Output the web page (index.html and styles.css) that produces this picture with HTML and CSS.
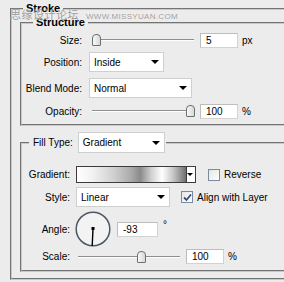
FILE: index.html
```html
<!DOCTYPE html>
<html lang="en">
<head>
    <meta charset="UTF-8">
    <title>Stroke</title>
    <link rel="stylesheet" href="styles.css">
</head>
<body>
    <fieldset class="group outer">
        <legend class="title">Stroke</legend>

        <fieldset class="group structure">
            <legend class="title sub">Structure</legend>

            <div class="row size">
                <label class="lbl">Size:</label>
                <div class="slider"><span class="thumb" style="left:0px"></span></div>
                <div class="num">5</div>
                <span class="unit">px</span>
            </div>
            <div class="row position">
                <label class="lbl">Position:</label>
                <div class="select w-position">Inside<span class="arrow"></span></div>
            </div>
            <div class="row blend">
                <label class="lbl">Blend Mode:</label>
                <div class="select w-blend">Normal<span class="arrow"></span></div>
            </div>
            <div class="row opacity">
                <label class="lbl">Opacity:</label>
                <div class="slider"><span class="thumb" style="left:94px"></span></div>
                <div class="num">100</div>
                <span class="unit">%</span>
            </div>
        </fieldset>

        <fieldset class="group fill">
            <legend class="fill-legend">
                <span class="legend-row">
                    <label class="fill-lbl">Fill Type:</label>
                    <span class="select w-fill">Gradient<span class="arrow"></span></span>
                </span>
            </legend>

            <div class="row gradient">
                <label class="lbl">Gradient:</label>
                <div class="swatch">
                    <div class="swatch-bar"></div>
                    <div class="swatch-drop"><span class="arrow small"></span></div>
                </div>
                <span class="check"></span>
                <span class="check-text">Reverse</span>
            </div>
            <div class="row style">
                <label class="lbl">Style:</label>
                <div class="select w-style">Linear<span class="arrow"></span></div>
                <span class="check checked">
                    <svg width="9" height="9" viewBox="0 0 9 9"><path d="M1 4.5 L3.5 7 L8 1.5" fill="none" stroke="#2f4f86" stroke-width="1.8"/></svg>
                </span>
                <span class="check-text">Align with Layer</span>
            </div>
            <div class="row angle">
                <label class="lbl">Angle:</label>
                <div class="dial">
                    <svg width="36" height="36" viewBox="0 0 36 36">
                        <circle cx="18" cy="18" r="16.8" fill="#f3f3f3" stroke="#4d5766" stroke-width="1.5"/>
                        <rect x="16.5" y="16" width="3" height="3" fill="#000"/>
                        <line x1="18" y1="17.5" x2="17.2" y2="35" stroke="#000" stroke-width="1.4"/>
                    </svg>
                </div>
                <div class="num wide">-93</div>
                <span class="deg">°</span>
            </div>
            <div class="row scale">
                <label class="lbl">Scale:</label>
                <div class="slider"><span class="thumb" style="left:59px"></span></div>
                <div class="num">100</div>
                <span class="unit">%</span>
            </div>
        </fieldset>
    </fieldset>

    <div class="watermark">思缘设计论坛 <span class="site">WWW.MISSYUAN.COM</span></div>
</body>
</html>
```

FILE: styles.css
```css
body {
    margin: 0;
    height: 282px;
    overflow: hidden;
    position: relative;
    background-color: #ececec;
    font-family: "Liberation Sans", Arial, sans-serif;
    font-size: 10px;
    color: #000;
}

.group {
    border: 2px groove #c8c8c8;
    margin: 0;
    padding: 0;
    min-width: 0;
}

.title {
    font-size: 11px;
    font-weight: bold;
    line-height: 13px;
    padding: 0 3px;
}

.outer {
    width: 400px;
    margin: 2px 0 0 10px;
    padding: 0 0 6px 8px;
}

.outer > .title {
    margin-left: 3px;
}

.structure {
    margin-top: 1px;
    padding-bottom: 5px;
}

.structure > .sub {
    margin-left: 11px;
}

.row {
    display: flex;
    align-items: center;
    white-space: nowrap;
}

.lbl {
    text-align: right;
    flex: none;
}

.structure .lbl {
    width: 60px;
    margin-right: 7px;
}

.fill .lbl {
    width: 48px;
    margin-right: 6px;
}

.size { margin-top: 2px; height: 18px; }
.position { margin-top: 3px; height: 20px; }
.blend { margin-top: 6px; height: 20px; }
.opacity { margin-top: 5px; height: 16px; }

/* slider */
.slider {
    position: relative;
    width: 102px;
    height: 16px;
    margin-left: 3px;
    flex: none;
}

.slider::before {
    content: "";
    position: absolute;
    left: 0;
    right: 0;
    top: 7px;
    border-top: 1px solid #8e8e8e;
    border-bottom: 1px solid #ffffff;
}

.thumb {
    position: absolute;
    top: 2px;
    width: 7px;
    height: 10px;
    background: linear-gradient(to right, #f8f8f8, #d8d8d8);
    border: 1px solid #6f6f6f;
    border-radius: 4px 4px 1px 1px;
}

.num {
    width: 31px;
    height: 13px;
    line-height: 13px;
    margin-left: 6px;
    padding-left: 5px;
    background: #fff;
    border: 1px solid #d2d2d2;
    border-top-color: #bdbdbd;
    border-left-color: #bdbdbd;
}

.num.wide {
    width: 34px;
}

.unit {
    margin-left: 4px;
}

/* dropdowns */
.select {
    position: relative;
    display: flex;
    align-items: center;
    height: 18px;
    padding-left: 4px;
    background: #fff;
    border: 1px solid #cfcfcf;
    box-sizing: content-box;
}

.w-position { width: 69px; }
.w-blend { width: 97px; }
.w-fill { width: 81px; height: 19px; }
.w-style { width: 88px; }

.arrow {
    position: absolute;
    right: 4px;
    top: 50%;
    margin-top: -2px;
    border-left: 4px solid transparent;
    border-right: 4px solid transparent;
    border-top: 4px solid #000;
}

.arrow.small {
    right: 2px;
    border-left-width: 3px;
    border-right-width: 3px;
    border-top-width: 3px;
}

/* fill section */
.fill {
    margin-top: 6px;
    padding-bottom: 6px;
}

.fill-legend {
    margin-left: 7px;
    padding: 0 1px 0 4px;
}

.legend-row {
    display: flex;
    align-items: center;
    height: 21px;
    white-space: nowrap;
}

.fill-lbl {
    margin-right: 5px;
}

.gradient { margin-top: 13px; height: 17px; }
.style { margin-top: 4px; height: 20px; }
.angle { margin-top: 4px; height: 36px; }
.scale { margin-top: 2px; height: 15px; }

.scale .slider {
    margin-left: 2px;
}

.swatch {
    display: flex;
    width: 118px;
    height: 15px;
    border: 1px solid #3c3c3c;
}

.swatch-bar {
    flex: 1;
    background: linear-gradient(to right, #ffffff 0%, #f2f2f2 14%, #cfcfcf 34%, #a9a9a9 50%, #8a8a8a 58%, #d0d0d0 68%, #ffffff 78%, #c8c8c8 88%, #6e6e6e 100%);
}

.swatch-drop {
    position: relative;
    width: 8px;
    background: #fff;
    border-left: 1px solid #3c3c3c;
}

.check {
    display: flex;
    align-items: center;
    justify-content: center;
    width: 10px;
    height: 10px;
    margin-left: 12px;
    background: linear-gradient(135deg, #e6e6e0, #ffffff);
    border: 1px solid #7a8aa0;
}

.style .check {
    margin-left: 11px;
}

.check-text {
    margin-left: 4px;
}

.dial {
    width: 36px;
    height: 36px;
    margin-left: -1px;
}

.deg {
    margin-left: 5px;
    align-self: flex-start;
    margin-top: 8px;
}

.watermark {
    position: absolute;
    left: 10px;
    top: 8px;
    color: #9a9a9a;
    font-family: "Noto Sans CJK SC", sans-serif;
    font-size: 11px;
    line-height: 13px;
    letter-spacing: 0.5px;
    text-shadow: 0 0 1px #ffffff;
}

.site {
    font-family: "Liberation Sans", Arial, sans-serif;
    font-size: 8px;
    letter-spacing: 0.3px;
    margin-left: 4px;
}
```
